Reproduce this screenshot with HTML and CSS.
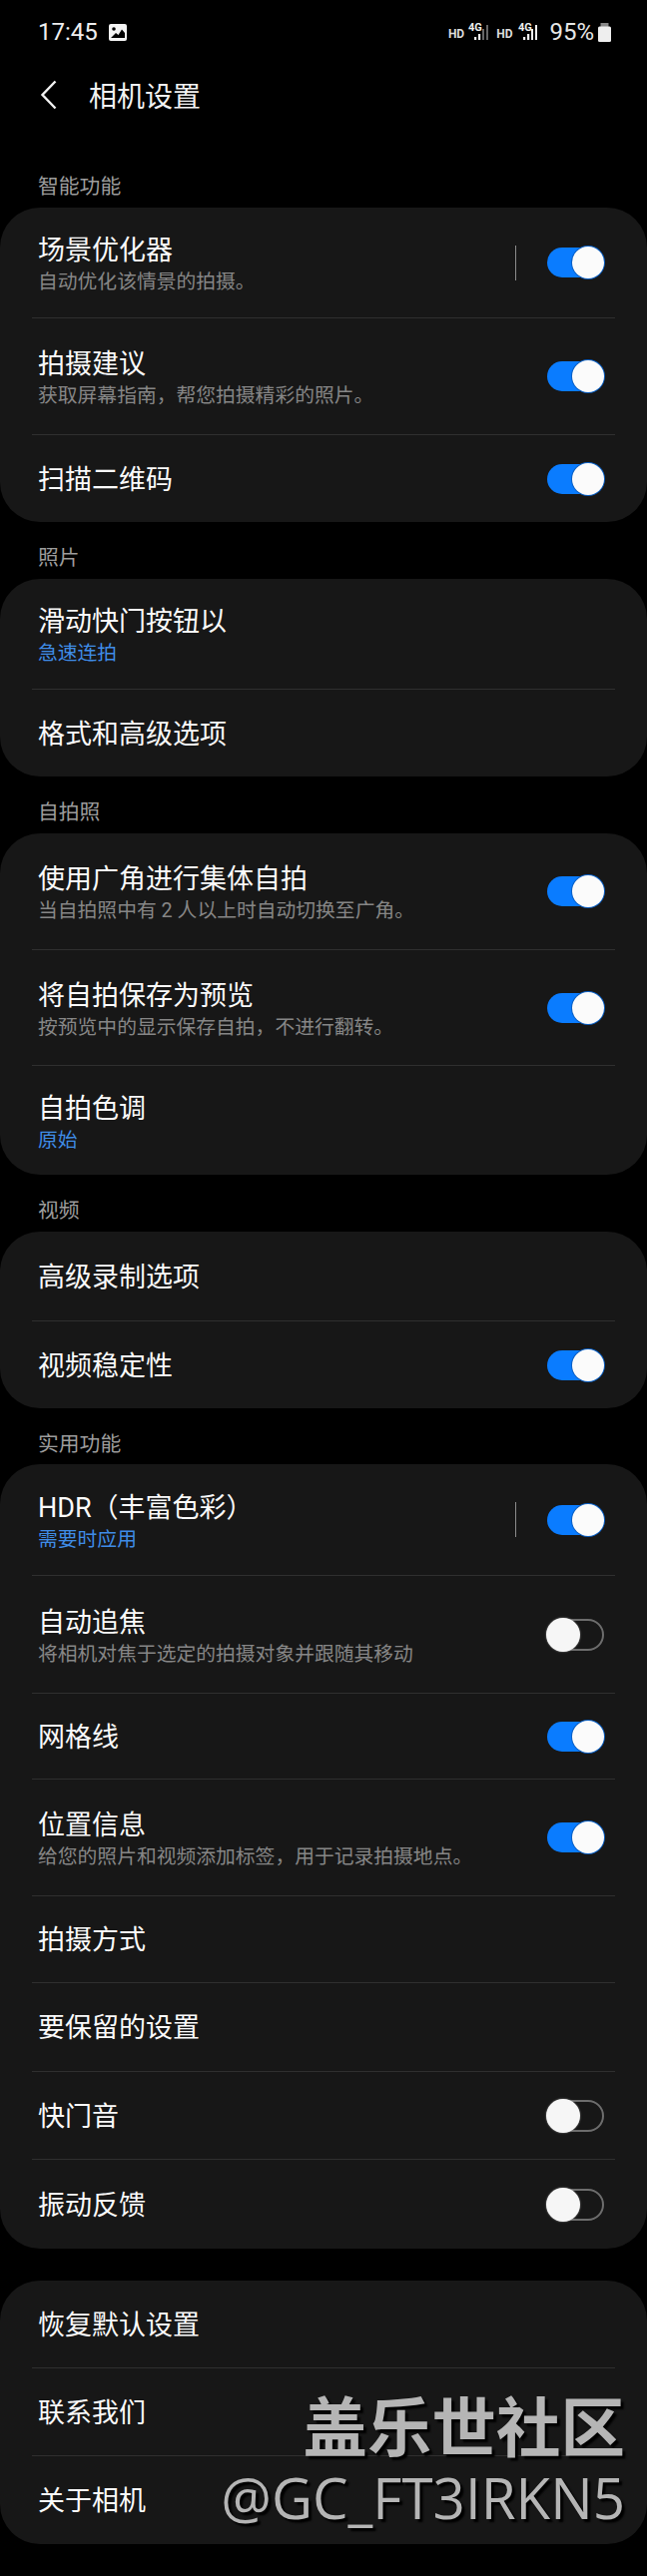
FILE: index.html
```html
<!DOCTYPE html>
<html lang="zh-CN">
<head>
    <meta charset="UTF-8">
    <meta name="viewport" content="width=device-width, initial-scale=1.0">
    <title>相机设置</title>
    <link rel="stylesheet" href="styles.css">
</head>
<body>
    <div class="page">
        <div class="status-bar">
            <div class="status-left">
                <span class="clock">17:45</span>
                <svg class="gallery-icon" width="18" height="17" viewBox="0 0 18 17">
                    <rect width="18" height="17" rx="2" fill="#f4f4f4"/>
                    <circle cx="5" cy="5" r="1.8" fill="#000"/>
                    <path d="M2 14 L7 9 L9.5 11 L13 5.5 L16 9 V14 Z" fill="#000"/>
                </svg>
            </div>
            <div class="status-right">
                <span class="hd">HD</span>
                <svg class="signal" width="22" height="18" viewBox="0 0 22 18">
                    <text x="0" y="8" class="signal-text">4G</text>
                    <rect x="6" y="14" width="2.2" height="3" fill="#eee"/>
                    <rect x="10" y="11" width="2.2" height="6" fill="#eee"/>
                    <rect x="14" y="6" width="2" height="11" fill="#666"/>
                    <rect x="18" y="2" width="2" height="15" fill="#666"/>
                </svg>
                <span class="hd hd-second">HD</span>
                <svg class="signal" width="22" height="18" viewBox="0 0 22 18">
                    <text x="0" y="8" class="signal-text">4G</text>
                    <rect x="5" y="14" width="2.2" height="3" fill="#eee"/>
                    <rect x="9" y="11" width="2.2" height="6" fill="#eee"/>
                    <rect x="13" y="6" width="2" height="11" fill="#eee"/>
                    <rect x="17" y="2" width="2" height="15" fill="#eee"/>
                </svg>
                <span class="battery-text">95%</span>
                <svg class="battery" width="13" height="19" viewBox="0 0 13 19">
                    <rect x="2.5" y="0" width="8" height="4" fill="#888"/>
                    <rect x="0" y="3.5" width="13" height="15.5" rx="1.5" fill="#eee"/>
                </svg>
            </div>
        </div>

        <div class="header">
            <svg class="back-icon" width="18" height="30" viewBox="0 0 18 30">
                <path d="M15.5 1.5 L2.5 15 L15.5 28.5" fill="none" stroke="#f2f2f2" stroke-width="2.4"/>
            </svg>
            <h1>相机设置</h1>
        </div>

        <div class="section-label first-label">智能功能</div>
        <div class="card">
            <div class="row h-110">
                <div class="text has-sub">
                    <div class="title">场景优化器</div>
                    <div class="sub">自动优化该情景的拍摄。</div>
                </div>
                <span class="v-line"></span>
                <span class="toggle on"><i></i></span>
            </div>
            <div class="divider"></div>
            <div class="row h-116">
                <div class="text has-sub">
                    <div class="title">拍摄建议</div>
                    <div class="sub">获取屏幕指南，帮您拍摄精彩的照片。</div>
                </div>
                <span class="toggle on"><i></i></span>
            </div>
            <div class="divider"></div>
            <div class="row h-87">
                <div class="text"><div class="title">扫描二维码</div></div>
                <span class="toggle on"><i></i></span>
            </div>
        </div>

        <div class="section-label">照片</div>
        <div class="card">
            <div class="row h-110">
                <div class="text has-sub">
                    <div class="title">滑动快门按钮以</div>
                    <div class="sub blue">急速连拍</div>
                </div>
            </div>
            <div class="divider"></div>
            <div class="row h-87">
                <div class="text"><div class="title">格式和高级选项</div></div>
            </div>
        </div>

        <div class="section-label">自拍照</div>
        <div class="card">
            <div class="row h-116">
                <div class="text has-sub">
                    <div class="title">使用广角进行集体自拍</div>
                    <div class="sub">当自拍照中有 2 人以上时自动切换至广角。</div>
                </div>
                <span class="toggle on"><i></i></span>
            </div>
            <div class="divider"></div>
            <div class="row h-115">
                <div class="text has-sub">
                    <div class="title">将自拍保存为预览</div>
                    <div class="sub">按预览中的显示保存自拍，不进行翻转。</div>
                </div>
                <span class="toggle on"><i></i></span>
            </div>
            <div class="divider"></div>
            <div class="row h-109">
                <div class="text has-sub">
                    <div class="title">自拍色调</div>
                    <div class="sub blue">原始</div>
                </div>
            </div>
        </div>

        <div class="section-label">视频</div>
        <div class="card">
            <div class="row h-89">
                <div class="text"><div class="title">高级录制选项</div></div>
            </div>
            <div class="divider"></div>
            <div class="row h-87">
                <div class="text"><div class="title">视频稳定性</div></div>
                <span class="toggle on"><i></i></span>
            </div>
        </div>

        <div class="section-label tight-label">实用功能</div>
        <div class="card">
            <div class="row h-111">
                <div class="text has-sub">
                    <div class="title">HDR（丰富色彩）</div>
                    <div class="sub blue">需要时应用</div>
                </div>
                <span class="v-line"></span>
                <span class="toggle on"><i></i></span>
            </div>
            <div class="divider"></div>
            <div class="row h-117">
                <div class="text has-sub">
                    <div class="title">自动追焦</div>
                    <div class="sub">将相机对焦于选定的拍摄对象并跟随其移动</div>
                </div>
                <span class="toggle"><i></i></span>
            </div>
            <div class="divider"></div>
            <div class="row h-85">
                <div class="text"><div class="title">网格线</div></div>
                <span class="toggle on"><i></i></span>
            </div>
            <div class="divider"></div>
            <div class="row h-116">
                <div class="text has-sub">
                    <div class="title">位置信息</div>
                    <div class="sub">给您的照片和视频添加标签，用于记录拍摄地点。</div>
                </div>
                <span class="toggle on"><i></i></span>
            </div>
            <div class="divider"></div>
            <div class="row h-86">
                <div class="text"><div class="title">拍摄方式</div></div>
            </div>
            <div class="divider"></div>
            <div class="row h-88">
                <div class="text"><div class="title">要保留的设置</div></div>
            </div>
            <div class="divider"></div>
            <div class="row h-87">
                <div class="text"><div class="title">快门音</div></div>
                <span class="toggle"><i></i></span>
            </div>
            <div class="divider"></div>
            <div class="row h-89">
                <div class="text"><div class="title">振动反馈</div></div>
                <span class="toggle"><i></i></span>
            </div>
        </div>

        <div class="card last-card">
            <div class="row h-87">
                <div class="text"><div class="title">恢复默认设置</div></div>
            </div>
            <div class="divider"></div>
            <div class="row h-87">
                <div class="text"><div class="title">联系我们</div></div>
            </div>
            <div class="divider"></div>
            <div class="row h-88">
                <div class="text"><div class="title">关于相机</div></div>
            </div>
        </div>

        <div class="watermark">
            <div class="wm-name">盖乐世社区</div>
            <div class="wm-user">@GC_FT3IRKN5</div>
        </div>
    </div>
</body>
</html>
```

FILE: styles.css
```css
body {
    margin: 0;
    background-color: #000000;
    color: #fafafa;
    font-family: Roboto, "Noto Sans CJK SC", sans-serif;
}

.page {
    position: relative;
    width: 648px;
    height: 2581px;
    overflow: hidden;
}

/* status bar */
.status-bar {
    height: 64px;
    padding: 0 36px 0 38px;
    display: flex;
    justify-content: space-between;
    align-items: center;
}

.status-left {
    display: flex;
    align-items: center;
    gap: 11px;
}

.clock {
    font-size: 24px;
    color: #eeeeee;
}

.status-right {
    display: flex;
    align-items: center;
}

.hd {
    font-size: 12px;
    font-weight: 700;
    color: #dddddd;
    margin-top: 3px;
    margin-right: 4px;
}

.hd-second {
    margin-left: 6px;
    margin-right: 6px;
}

.signal {
    overflow: visible;
}

.signal-text {
    font-family: Roboto, sans-serif;
    font-size: 11px;
    font-weight: 700;
    fill: #eeeeee;
}

.battery-text {
    font-size: 24px;
    color: #e6e6e6;
    margin-left: 9px;
    margin-right: 4px;
}

/* page title */
.header {
    height: 62px;
    padding-bottom: 2px;
    padding-left: 40px;
    display: flex;
    align-items: center;
    gap: 31px;
}

h1 {
    margin: 0;
    font-size: 28px;
    font-weight: 400;
    color: #f2f2f2;
}

.section-label {
    height: 36px;
    padding-top: 21px;
    padding-left: 38px;
    font-size: 20.8px;
    line-height: 30px;
    color: #9c9c9c;
}

.first-label {
    margin-top: 23px;
}

.tight-label {
    height: 35px;
}

.card {
    background: #171717;
    border-radius: 40px;
}

.last-card {
    margin-top: 32px;
}

.row {
    padding: 0 43px 0 38px;
    display: flex;
    align-items: center;
}

.h-85 { height: 85px; }
.h-86 { height: 86px; }
.h-87 { height: 87px; }
.h-88 { height: 88px; }
.h-89 { height: 89px; }
.h-109 { height: 109px; }
.h-110 { height: 110px; }
.h-111 { height: 111px; }
.h-115 { height: 115px; }
.h-116 { height: 116px; }
.h-117 { height: 117px; }

.text {
    flex: 1;
    padding-top: 2px;
}

.has-sub {
    padding-top: 6px;
}

.title {
    font-size: 27px;
    line-height: 34px;
    color: #fafafa;
}

.sub {
    font-size: 19.8px;
    line-height: 30px;
    color: #868686;
}

.blue {
    color: #3f8ce6;
}

.divider {
    height: 1px;
    margin: 0 32px;
    background: #2f2f2f;
}

.v-line {
    width: 1px;
    height: 35px;
    margin-right: 31px;
    background: #8c8c8c;
}

/* switches */
.toggle {
    width: 57px;
    height: 32px;
    box-sizing: border-box;
    border: 2px solid #6d6d6d;
    border-radius: 16px;
    display: flex;
    align-items: center;
    justify-content: flex-start;
}

.toggle i {
    width: 34px;
    height: 34px;
    flex: none;
    margin-left: -3px;
    border-radius: 50%;
    background: #f6f6f6;
    box-shadow: 0 0 2px #888888;
}

.toggle.on {
    height: 30px;
    border: none;
    border-radius: 15px;
    background: #0a7cff;
    justify-content: flex-end;
}

.toggle.on i {
    width: 32px;
    height: 32px;
    margin-left: 0;
    background: #fbfbfb;
    box-shadow: 0 0 0 1px #0a5fc4;
}

/* forum watermark sits over the last card */
.watermark {
    position: absolute;
    right: 22px;
    top: 2388px;
    text-align: right;
    color: #b5b5b5;
    text-shadow: 3px 3px 2px #000000;
}

.wm-name {
    font-family: "Noto Sans CJK SC", sans-serif;
    font-size: 64.5px;
    font-weight: 700;
    line-height: 80px;
}

.wm-user {
    font-family: "Open Sans", sans-serif;
    font-size: 56.5px;
    line-height: 70px;
    white-space: nowrap;
}
```
